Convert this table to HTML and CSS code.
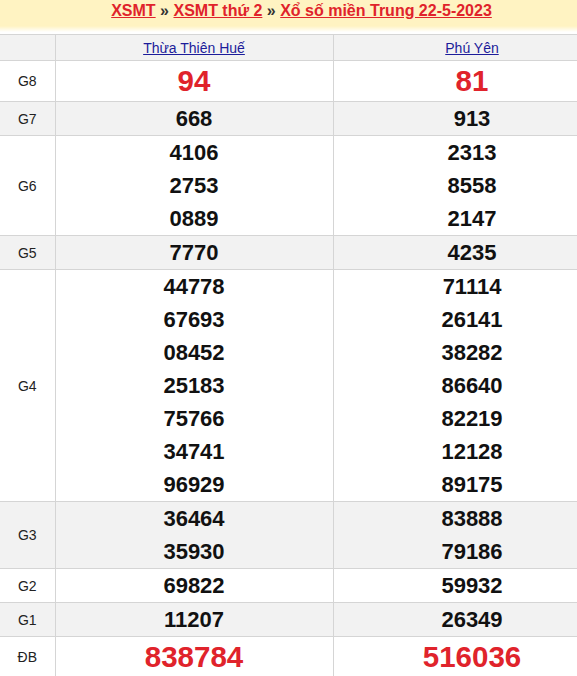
FILE: index.html
```html
<!DOCTYPE html>
<html lang="vi">
<head>
<meta charset="utf-8">
<title>XSMT thứ 2</title>
<link rel="stylesheet" href="styles.css">
</head>
<body>
<div class="page">
  <div class="banner">
    <a href="#">XSMT</a> <span class="sep">»</span> <a href="#">XSMT thứ 2</a> <span class="sep">»</span> <a href="#">Xổ số miền Trung 22-5-2023</a>
  </div>
  <table class="results">
    <colgroup><col class="c-label"><col class="c-prov"><col class="c-prov"></colgroup>
    <thead>
      <tr class="alt"><th></th><th><a href="#">Thừa Thiên Huế</a></th><th><a href="#">Phú Yên</a></th></tr>
    </thead>
    <tbody>
      <tr><td class="lbl">G8</td><td><div class="n big">94</div></td><td><div class="n big">81</div></td></tr>
      <tr class="alt"><td class="lbl">G7</td><td><div class="n">668</div></td><td><div class="n">913</div></td></tr>
      <tr><td class="lbl">G6</td><td><div class="n">4106</div><div class="n">2753</div><div class="n">0889</div></td><td><div class="n">2313</div><div class="n">8558</div><div class="n">2147</div></td></tr>
      <tr class="alt"><td class="lbl">G5</td><td><div class="n">7770</div></td><td><div class="n">4235</div></td></tr>
      <tr><td class="lbl">G4</td>
        <td><div class="n">44778</div><div class="n">67693</div><div class="n">08452</div><div class="n">25183</div><div class="n">75766</div><div class="n">34741</div><div class="n">96929</div></td>
        <td><div class="n">71114</div><div class="n">26141</div><div class="n">38282</div><div class="n">86640</div><div class="n">82219</div><div class="n">12128</div><div class="n">89175</div></td></tr>
      <tr class="alt"><td class="lbl">G3</td><td><div class="n">36464</div><div class="n">35930</div></td><td><div class="n">83888</div><div class="n">79186</div></td></tr>
      <tr><td class="lbl">G2</td><td><div class="n">69822</div></td><td><div class="n">59932</div></td></tr>
      <tr class="alt"><td class="lbl">G1</td><td><div class="n">11207</div></td><td><div class="n">26349</div></td></tr>
      <tr><td class="lbl">ĐB</td><td><div class="n big">838784</div></td><td><div class="n big">516036</div></td></tr>
    </tbody>
  </table>
</div>
</body>
</html>
```
FILE: styles.css
```css
html, body {
  margin: 0;
  padding: 0;
  background: #fff;
  overflow: hidden;
}
body {
  font-family: Arial, "Liberation Sans", sans-serif;
}
.page {
  width: 611px;
}
.banner {
  height: 34px;
  box-sizing: border-box;
  padding-top: 1px;
  padding-right: 8px;
  text-align: center;
  font-size: 16px;
  font-weight: bold;
  line-height: 20px;
  background: linear-gradient(to bottom, #fff3c2 0, #fff3c2 26px, #ffffff 32px);
  color: #333;
}
.banner a {
  color: #e0232b;
  text-decoration: underline;
}
.banner .sep {
  color: #333;
}
.results {
  width: 611px;
  border-collapse: collapse;
  table-layout: fixed;
}
.c-label { width: 55px; }
.c-prov { width: 278px; }
.results th,
.results td {
  border: 1px solid #d5d5d5;
  padding: 0;
  text-align: center;
  vertical-align: middle;
}
.results tr > :first-child { border-left: none; }
.results th {
  height: 25px;
  font-size: 14px;
  font-weight: normal;
}
.results th a {
  color: #1c1c9a;
  text-decoration: underline;
}
.alt { background: #f2f2f2; }
.lbl {
  font-size: 14px;
  color: #222;
}
.n {
  font-size: 22px;
  font-weight: bold;
  line-height: 33px;
  color: #111;
}
.n.big {
  font-size: 29.5px;
  line-height: 40px;
  color: #e0232b;
}
```
